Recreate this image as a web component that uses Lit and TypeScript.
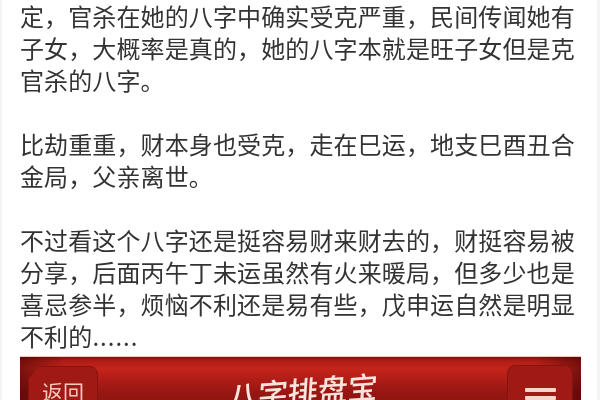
import { LitElement, html, css } from "lit";
import { customElement } from "lit/decorators.js";

@customElement("app-root")
export class AppRoot extends LitElement {
  static styles = css`
    :host {
      display: block;
      width: 600px;
      height: 400px;
      overflow: hidden;
      background: #fff;
      font-family: "Noto Sans CJK SC", "Liberation Sans", sans-serif;
    }
    .page {
      height: 400px;
      box-sizing: border-box;
      padding: 0 16px 0 18px;
      border-left: 2px solid #f4f4f4;
      border-right: 3px solid #f4f4f4;
      display: flex;
      flex-direction: column;
    }
    .text {
      filter: blur(0.45px);
      color: #333;
      font-size: 24px;
      letter-spacing: 0.12px;
      line-height: 32px;
    }
    p {
      margin: 0 0 32px;
      white-space: nowrap;
    }
    p:last-child {
      margin-bottom: 0;
    }
    .dots {
      letter-spacing: 1px;
    }
    .banner {
      flex: none;
      margin-top: 4px;
      height: 70px;
      box-sizing: border-box;
      padding: 9px 8px 0 8px;
      display: flex;
      justify-content: space-between;
      align-items: flex-start;
      background:
        linear-gradient(90deg, rgba(50, 0, 0, 0.5), transparent 8%, transparent 92%, rgba(50, 0, 0, 0.5)),
        linear-gradient(#7d1311 0, #b01c16 4px, #c4241a 12px, #b01d17 22px, #931511 38px);
      border-top: 1px solid #f3c9b4;
      filter: blur(0.6px);
    }
    .btn {
      box-sizing: border-box;
      height: 50px;
      border-radius: 8px;
      background: #9f1a15;
      border: 1px solid #871310;
      color: #f6c9bd;
      display: flex;
      justify-content: center;
    }
    .back {
      width: 70px;
      padding-top: 11px;
      font-size: 21px;
      line-height: 26px;
      clip-path: polygon(12px 0, 100% 0, 100% 100%, 0 100%, 0 13px);
    }
    .menu {
      width: 66px;
      margin-top: -1px;
      flex-direction: column;
      align-items: center;
      gap: 4.5px;
      padding-top: 16px;
    }
    .menu i {
      display: block;
      flex: none;
      width: 31px;
      height: 4px;
      border-radius: 1px;
      background: #f8d4cb;
    }
    .title {
      margin-top: 4px;
      color: #f8e4dc;
      font-size: 30px;
      line-height: 40px;
      font-weight: 500;
      transform: rotate(-4deg) skewX(-8deg);
    }
  `;

  render() {
    return html`
      <div class="page">
        <div class="text">
          <p>定，官杀在她的八字中确实受克严重，民间传闻她有<br />子女，大概率是真的，她的八字本就是旺子女但是克<br />官杀的八字。</p>
          <p>比劫重重，财本身也受克，走在巳运，地支巳酉丑合<br />金局，父亲离世。</p>
          <p>不过看这个八字还是挺容易财来财去的，财挺容易被<br />分享，后面丙午丁未运虽然有火来暖局，但多少也是<br />喜忌参半，烦恼不利还是易有些，戊申运自然是明显<br />不利的<span class="dots">......</span></p>
        </div>
        <div class="banner">
          <div class="btn back">返回</div>
          <div class="title">八字排盘宝</div>
          <div class="btn menu"><i></i><i></i><i></i></div>
        </div>
      </div>
    `;
  }
}
